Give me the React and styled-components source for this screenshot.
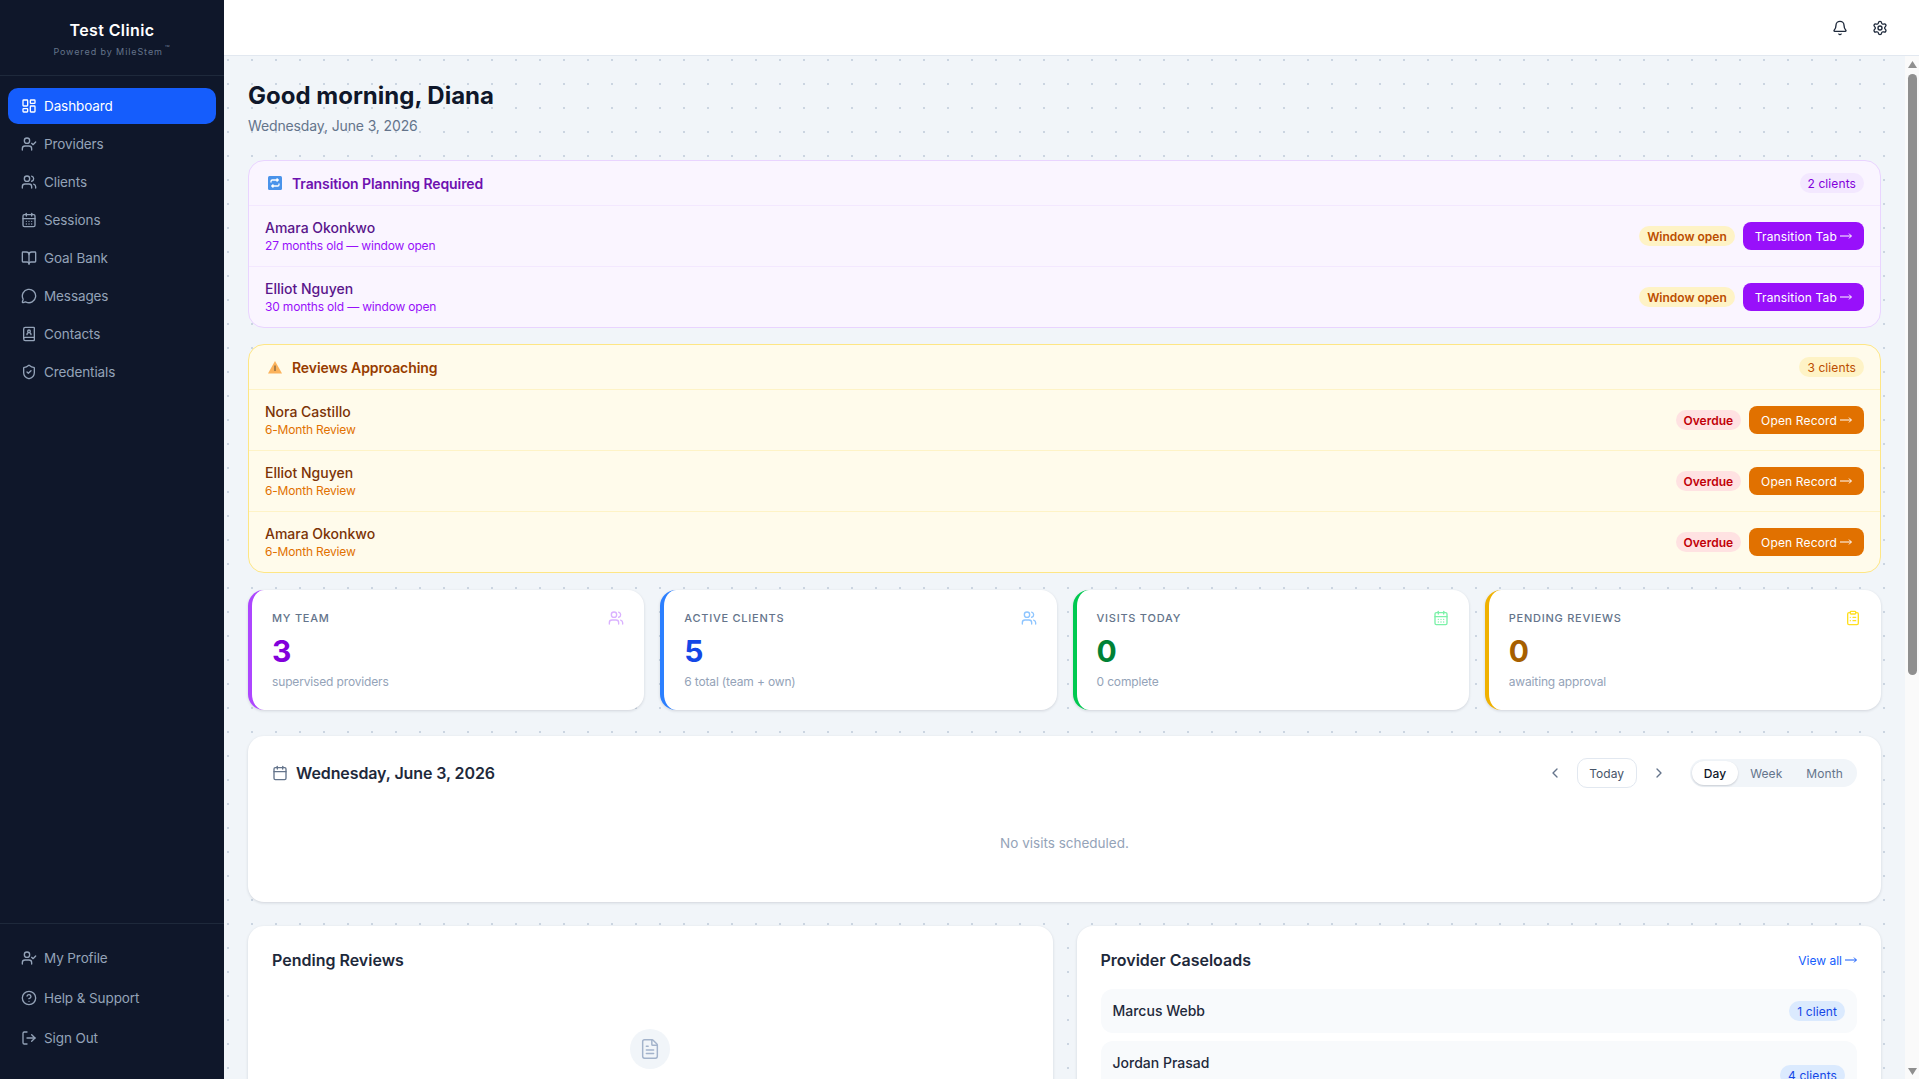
import React from 'react';
import styled, { createGlobalStyle } from 'styled-components';
import {
  LayoutDashboard, UserCheck, Users, CalendarDays, BookOpen, MessageCircle, BookUser, ShieldCheck,
  CircleHelp, LogOut, Bell, Settings, ClipboardList, FileText, ChevronLeft, ChevronRight, Calendar,
} from 'lucide-react';

const GlobalStyle = createGlobalStyle`
  html, body { margin: 0; height: 100%; overflow: hidden; }
  body { font-family: Inter, "Liberation Sans", sans-serif; color: #0f172a; }
  * { box-sizing: border-box; }
`;

const Shell = styled.div`
  display: flex;
  height: 100vh;
  background-color: #f1f5f9;
  background-image: radial-gradient(circle, #cbd5e1 1px, transparent 1px);
  background-size: 24px 24px;
`;

const Sidebar = styled.aside`
  width: 224px;
  flex-shrink: 0;
  background: #0f172a;
  display: flex;
  flex-direction: column;
`;

const Brand = styled.div`
  height: 76px;
  border-bottom: 1px solid #1e293b;
  display: flex;
  flex-direction: column;
  align-items: center;
  padding-top: 20px;
`;

const BrandName = styled.div`
  color: #fff;
  font-size: 16px;
  line-height: 20px;
  font-weight: 600;
  letter-spacing: 0.4px;
`;

const BrandSub = styled.div`
  color: #64748b;
  font-size: 9px;
  line-height: 14px;
  margin-top: 5px;
  letter-spacing: 0.9px;
  sup { font-size: 8px; line-height: 0; margin-left: 2px; }
`;

const Nav = styled.nav`
  flex: 1;
  padding: 12px 8px;
  display: flex;
  flex-direction: column;
  gap: 2px;
`;

const NavItem = styled.a`
  height: 36px;
  border-radius: 10px;
  padding: 0 13px;
  display: flex;
  align-items: center;
  gap: 7px;
  font-size: 13.5px;
  letter-spacing: -0.1px;
  color: ${p => (p.$active ? '#fff' : '#94a3b8')};
  background: ${p => (p.$active ? '#155dfc' : 'transparent')};
`;

const SideFoot = styled.div`
  border-top: 1px solid #1e293b;
  padding: 16px 8px 23px;
  display: flex;
  flex-direction: column;
  gap: 4px;
`;

const Column = styled.div`
  flex: 1;
  min-width: 0;
  display: flex;
  flex-direction: column;
`;

const TopBar = styled.header`
  height: 56px;
  flex-shrink: 0;
  background: #fff;
  border-bottom: 1px solid #e2e8f0;
  display: flex;
  align-items: center;
  justify-content: flex-end;
  gap: 24px;
  padding-right: 31px;
  color: #1e293b;
`;

const Body = styled.div`
  flex: 1;
  min-height: 0;
  display: flex;
`;

const Main = styled.main`
  flex: 1;
  min-width: 0;
  overflow: hidden;
  padding: 24px;
`;

const ScrollRail = styled.div`
  width: 14px;
  flex-shrink: 0;
  background: #fafafa;
  padding: 5px 2px 4px 3px;
  display: flex;
  flex-direction: column;
  color: #8f8f8f;
`;

const ScrollThumb = styled.div`
  height: 601px;
  margin-top: 6px;
  border-radius: 5px;
  background: #8f8f8f;
`;

const ScrollEnd = styled.svg`
  display: block;
  margin-top: ${p => (p.$last ? 'auto' : '0')};
  flex-shrink: 0;
`;

const Heading = styled.h1`
  margin: 0;
  font-size: 24px;
  line-height: 32px;
  font-weight: 700;
  color: #0f172a;
`;

const DateLine = styled.p`
  margin: 4px 0 0;
  font-size: 14px;
  line-height: 20px;
  letter-spacing: -0.13px;
  color: #64748b;
`;

const Alert = styled.section`
  margin-top: ${p => p.$top}px;
  border: 1px solid ${p => p.$line};
  border-radius: 16px;
  background: ${p => p.$bg};
  overflow: hidden;
`;

const AlertHead = styled.div`
  height: 44px;
  padding: 0 16px;
  display: flex;
  align-items: center;
  justify-content: space-between;
`;

const AlertTitle = styled.div`
  display: flex;
  align-items: center;
  gap: 10px;
  padding-left: 3px;
  font-size: 14px;
  letter-spacing: -0.1px;
  font-weight: 600;
  color: ${p => p.$color};
`;

const AlertRow = styled.div`
  height: 61px;
  padding: 0 16px;
  border-top: 1px solid ${p => p.$line};
  display: flex;
  align-items: center;
  justify-content: space-between;
`;

const PersonName = styled.div`
  font-size: 14px;
  line-height: 18px;
  font-weight: 500;
  color: ${p => p.$color};
`;

const PersonSub = styled.div`
  margin-top: 1px;
  font-size: 12px;
  line-height: 16px;
  letter-spacing: -0.18px;
  color: ${p => p.$color};
`;

const RowActions = styled.div`
  display: flex;
  align-items: center;
  gap: 8px;
`;

const Pill = styled.span`
  height: 20px;
  padding: 0 8px;
  border-radius: 999px;
  display: inline-flex;
  align-items: center;
  font-size: 12px;
  letter-spacing: ${p => (p.$weight ? '0' : '0.1px')};
  font-weight: ${p => p.$weight || 400};
  background: ${p => p.$bg};
  color: ${p => p.$color};
`;

const ActionButton = styled.button`
  height: 28px;
  padding: 0 12px;
  border: 0;
  border-radius: 8px;
  display: flex;
  align-items: center;
  gap: 3px;
  font: 400 12px Inter, sans-serif;
  letter-spacing: 0.15px;
  color: #fff;
  background: ${p => p.$bg};
`;

const Stats = styled.div`
  margin-top: 17px;
  display: grid;
  grid-template-columns: repeat(4, 1fr);
  gap: 16px;
`;

const Stat = styled.div`
  height: 120px;
  background: #fff;
  border-left: 4px solid ${p => p.$color};
  border-radius: 16px;
  box-shadow: 0 1px 3px rgba(15, 23, 42, 0.14);
  padding: 20px;
`;

const StatTop = styled.div`
  display: flex;
  align-items: center;
  justify-content: space-between;
  height: 16px;
  color: ${p => p.$color};
`;

const StatLabel = styled.span`
  font-size: 11px;
  font-weight: 500;
  letter-spacing: 0.75px;
  text-transform: uppercase;
  color: #64748b;
`;

const StatValue = styled.div`
  margin-top: 7px;
  font-size: 30px;
  line-height: 36px;
  font-weight: 700;
  color: ${p => p.$color};
`;

const StatSub = styled.div`
  margin-top: 5px;
  font-size: 12px;
  line-height: 16px;
  letter-spacing: -0.15px;
  color: #94a3b8;
`;

const Card = styled.section`
  background: #fff;
  border-radius: 16px;
  box-shadow: 0 1px 3px rgba(15, 23, 42, 0.14);
`;

const Schedule = styled(Card)`
  margin-top: 26px;
  height: 166px;
  padding: 22px 24px 24px;
`;

const ScheduleHead = styled.div`
  height: 30px;
  display: flex;
  align-items: center;
  justify-content: space-between;
`;

const ScheduleTitle = styled.div`
  display: flex;
  align-items: center;
  gap: 8px;
  font-size: 16px;
  letter-spacing: -0.1px;
  font-weight: 600;
  color: #1e293b;
  svg { color: #64748b; }
`;

const ScheduleTools = styled.div`
  display: flex;
  align-items: center;
`;

const IconStep = styled.span`
  width: 30px;
  display: flex;
  justify-content: center;
  color: #64748b;
`;

const TodayButton = styled.button`
  width: 60px;
  height: 30px;
  margin: 0 7px;
  background: #fff;
  border: 1px solid #e2e8f0;
  border-radius: 10px;
  font: 400 12px Inter, sans-serif;
  color: #475569;
`;

const Toggle = styled.div`
  margin-left: 16px;
  height: 28px;
  padding: 2px;
  background: #f1f5f9;
  border-radius: 999px;
  display: flex;
  align-items: center;
`;

const ToggleItem = styled.span`
  height: 24px;
  padding: 0 12px;
  border-radius: 999px;
  display: flex;
  align-items: center;
  font-size: 12px;
  letter-spacing: 0.1px;
  font-weight: ${p => (p.$active ? 500 : 400)};
  color: ${p => (p.$active ? '#0f172a' : '#64748b')};
  background: ${p => (p.$active ? '#fff' : 'transparent')};
  box-shadow: ${p => (p.$active ? '0 1px 2px rgba(15,23,42,.18)' : 'none')};
`;

const Empty = styled.p`
  margin: 45px 0 0;
  text-align: center;
  font-size: 13.5px;
  line-height: 20px;
  color: #94a3b8;
`;

const Columns = styled.div`
  margin-top: 24px;
  display: grid;
  grid-template-columns: 1fr 1fr;
  gap: 24px;
`;

const Panel = styled(Card)`
  padding: 23px 24px 24px;
`;

const PanelHead = styled.div`
  height: 22px;
  display: flex;
  align-items: center;
  justify-content: space-between;
`;

const PanelTitle = styled.h2`
  margin: 0;
  font-size: 16px;
  font-weight: 600;
  color: #1e293b;
`;

const ViewAll = styled.a`
  display: flex;
  align-items: center;
  gap: 3px;
  font-size: 12px;
  color: #155dfc;
`;

const EmptyIcon = styled.div`
  margin: 58px auto 0;
  width: 40px;
  height: 40px;
  border-radius: 50%;
  background: #f1f5f9;
  color: #a3b3cb;
  display: flex;
  align-items: center;
  justify-content: center;
`;

const CaseList = styled.div`
  margin-top: 18px;
  display: flex;
  flex-direction: column;
  gap: 8px;
`;

const CaseRow = styled.div`
  padding: 12px;
  min-height: ${p => (p.$tall ? 68 : 44)}px;
  background: #f8fafc;
  border-radius: 12px;
  display: flex;
  align-items: center;
  justify-content: space-between;
`;

const CaseName = styled.div`
  align-self: flex-start;
  font-size: 14px;
  line-height: 20px;
  font-weight: 500;
  color: #1e293b;
`;

function Arrow() {
  return (
    <svg width="12" height="8" viewBox="0 0 12 8" fill="none" stroke="currentColor" strokeWidth="1">
      <path d="M0 4h11.4M9 1.6 11.4 4 9 6.4" />
    </svg>
  );
}

function TransitionIcon() {
  return (
    <svg width="14" height="14" viewBox="0 0 14 14">
      <rect width="14" height="14" rx="1.5" fill="#4a93ea" />
      <path d="M3 6.5V5.2C3 4.5 3.5 4 4.2 4H10M8.6 2.6 10.2 4 8.6 5.4M11 7.5v1.3c0 .7-.5 1.2-1.2 1.2H4M5.4 8.6 3.8 10l1.6 1.4" fill="none" stroke="#fff" strokeWidth="1.3" />
    </svg>
  );
}

function WarningIcon() {
  return (
    <svg width="14" height="14" viewBox="0 0 14 14">
      <path d="M7 1 14 13.5H0Z" fill="#fbb25c" />
      <path d="M7 5.5v5.5" stroke="#5b4a35" strokeWidth="1" />
    </svg>
  );
}

const mainNav = [
  [LayoutDashboard, 'Dashboard', true],
  [UserCheck, 'Providers'],
  [Users, 'Clients'],
  [CalendarDays, 'Sessions'],
  [BookOpen, 'Goal Bank'],
  [MessageCircle, 'Messages'],
  [BookUser, 'Contacts'],
  [ShieldCheck, 'Credentials'],
];

const footNav = [
  [UserCheck, 'My Profile'],
  [CircleHelp, 'Help & Support'],
  [LogOut, 'Sign Out'],
];

const transitions = [
  ['Amara Okonkwo', '27 months old — window open'],
  ['Elliot Nguyen', '30 months old — window open'],
];

const reviews = ['Nora Castillo', 'Elliot Nguyen', 'Amara Okonkwo'];

const stats = [
  { label: 'My Team', value: 3, sub: 'supervised providers', icon: Users, edge: '#ad46ff', tint: '#dab2ff', ink: '#8200db' },
  { label: 'Active Clients', value: 5, sub: '6 total (team + own)', icon: Users, edge: '#2b7fff', tint: '#8ec5ff', ink: '#1447e6' },
  { label: 'Visits Today', value: 0, sub: '0 complete', icon: CalendarDays, edge: '#00c950', tint: '#7bf1a8', ink: '#008236' },
  { label: 'Pending Reviews', value: 0, sub: 'awaiting approval', icon: ClipboardList, edge: '#f0b100', tint: '#ffdf20', ink: '#a65f00' },
];

function App() {
  return (
    <Shell>
      <GlobalStyle />
      <Sidebar>
        <Brand>
          <BrandName>Test Clinic</BrandName>
          <BrandSub>Powered by MileStem<sup>™</sup></BrandSub>
        </Brand>
        <Nav>
          {mainNav.map(([Icon, label, active]) => (
            <NavItem key={label} $active={active}><Icon size={16} />{label}</NavItem>
          ))}
        </Nav>
        <SideFoot>
          {footNav.map(([Icon, label]) => (
            <NavItem key={label}><Icon size={16} />{label}</NavItem>
          ))}
        </SideFoot>
      </Sidebar>
      <Column>
        <TopBar>
          <Bell size={16} />
          <Settings size={16} />
        </TopBar>
        <Body>
          <Main>
            <Heading>Good morning, Diana</Heading>
            <DateLine>Wednesday, June 3, 2026</DateLine>

            <Alert $top={24} $line="#e9d4ff" $bg="#faf5ff">
              <AlertHead>
                <AlertTitle $color="#6e11b0"><TransitionIcon />Transition Planning Required</AlertTitle>
                <Pill $bg="#f3e8ff" $color="#8200db">2 clients</Pill>
              </AlertHead>
              {transitions.map(([name, sub]) => (
                <AlertRow key={name} $line="#f3e8ff">
                  <div>
                    <PersonName $color="#59168b">{name}</PersonName>
                    <PersonSub $color="#9810fa">{sub}</PersonSub>
                  </div>
                  <RowActions>
                    <Pill $weight={600} $bg="#fef3c6" $color="#bb4d00">Window open</Pill>
                    <ActionButton $bg="#9810fa">Transition Tab<Arrow /></ActionButton>
                  </RowActions>
                </AlertRow>
              ))}
            </Alert>

            <Alert $top={16} $line="#fee685" $bg="#fffbeb">
              <AlertHead>
                <AlertTitle $color="#973c00"><WarningIcon />Reviews Approaching</AlertTitle>
                <Pill $bg="#fef3c6" $color="#bb4d00">3 clients</Pill>
              </AlertHead>
              {reviews.map(name => (
                <AlertRow key={name} $line="#fef3c6">
                  <div>
                    <PersonName $color="#7b3306">{name}</PersonName>
                    <PersonSub $color="#e17100">6-Month Review</PersonSub>
                  </div>
                  <RowActions>
                    <Pill $weight={600} $bg="#ffe2e2" $color="#c10007">Overdue</Pill>
                    <ActionButton $bg="#e17100">Open Record<Arrow /></ActionButton>
                  </RowActions>
                </AlertRow>
              ))}
            </Alert>

            <Stats>
              {stats.map(s => (
                <Stat key={s.label} $color={s.edge}>
                  <StatTop $color={s.tint}>
                    <StatLabel>{s.label}</StatLabel>
                    <s.icon size={16} />
                  </StatTop>
                  <StatValue $color={s.ink}>{s.value}</StatValue>
                  <StatSub>{s.sub}</StatSub>
                </Stat>
              ))}
            </Stats>

            <Schedule>
              <ScheduleHead>
                <ScheduleTitle><Calendar size={16} />Wednesday, June 3, 2026</ScheduleTitle>
                <ScheduleTools>
                  <IconStep><ChevronLeft size={16} /></IconStep>
                  <TodayButton>Today</TodayButton>
                  <IconStep><ChevronRight size={16} /></IconStep>
                  <Toggle>
                    <ToggleItem $active>Day</ToggleItem>
                    <ToggleItem>Week</ToggleItem>
                    <ToggleItem>Month</ToggleItem>
                  </Toggle>
                </ScheduleTools>
              </ScheduleHead>
              <Empty>No visits scheduled.</Empty>
            </Schedule>

            <Columns>
              <Panel>
                <PanelHead><PanelTitle>Pending Reviews</PanelTitle></PanelHead>
                <EmptyIcon><FileText size={22} strokeWidth={1.6} /></EmptyIcon>
              </Panel>
              <Panel>
                <PanelHead>
                  <PanelTitle>Provider Caseloads</PanelTitle>
                  <ViewAll>View all<Arrow /></ViewAll>
                </PanelHead>
                <CaseList>
                  <CaseRow>
                    <CaseName>Marcus Webb</CaseName>
                    <Pill $bg="#dbeafe" $color="#1447e6">1 client</Pill>
                  </CaseRow>
                  <CaseRow $tall>
                    <CaseName>Jordan Prasad</CaseName>
                    <Pill $bg="#dbeafe" $color="#1447e6">4 clients</Pill>
                  </CaseRow>
                </CaseList>
              </Panel>
            </Columns>
          </Main>
          <ScrollRail>
            <ScrollEnd width="9" height="7" viewBox="0 0 9 7" fill="currentColor"><path d="M4.5 0 9 7H0Z" /></ScrollEnd>
            <ScrollThumb />
            <ScrollEnd $last width="9" height="7" viewBox="0 0 9 7" fill="currentColor"><path d="M0 0h9L4.5 7Z" /></ScrollEnd>
          </ScrollRail>
        </Body>
      </Column>
    </Shell>
  );
}

export default App;
